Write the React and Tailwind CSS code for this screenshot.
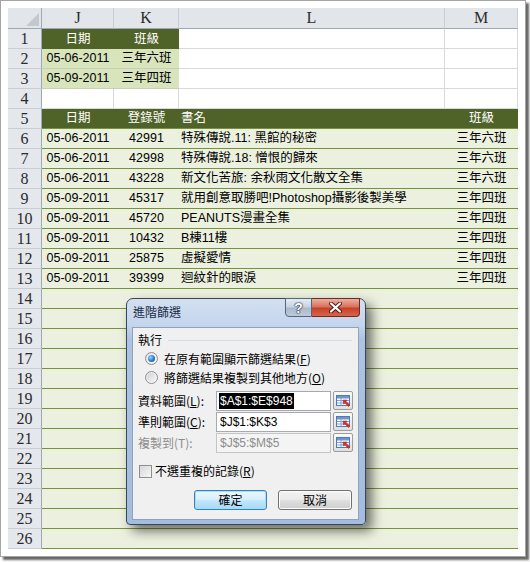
import React from 'react';

const dataRows = [
  ['05-06-2011', '42991', '特殊傳說.11: 黑館的秘密', '三年六班'],
  ['05-06-2011', '42998', '特殊傳說.18: 憎恨的歸來', '三年六班'],
  ['05-06-2011', '43228', '新文化苦旅: 余秋雨文化散文全集', '三年六班'],
  ['05-09-2011', '45317', '就用創意取勝吧!Photoshop攝影後製美學', '三年四班'],
  ['05-09-2011', '45720', 'PEANUTS漫畫全集', '三年四班'],
  ['05-09-2011', '10432', 'B棟11樓', '三年四班'],
  ['05-09-2011', '25875', '虛擬愛情', '三年四班'],
  ['05-09-2011', '39399', '迴紋針的眼淚', '三年四班'],
];

const emptyRows = [14, 15, 16, 17, 18, 19, 20, 21, 22, 23, 24, 25, 26];

const rowHead =
  "flex items-center justify-center bg-[#e4e7ec] border-r border-b border-r-[#9ea7b3] border-b-[#c9ced5] text-[16px] text-[#2b2b2b] font-['Liberation_Serif',serif] leading-none";
const colHead =
  "flex items-center justify-center bg-[#e2e5ea] border-r border-b border-r-[#c9ced5] border-b-[#9ea7b3] text-[16px] text-[#2b2b2b] font-['Liberation_Serif',serif] leading-none";
const white = 'bg-white border-r border-b border-[#d9d9d9]';
const dark = 'flex items-center justify-center bg-[#4f6228] text-white';
const crit = 'flex items-center justify-center bg-[#d8e4bc] border-b border-[#c7d0b4]';
const dataC = 'flex items-center justify-center bg-[#ebf1de] border-b border-[#76933c]';
const dataL = 'flex items-center justify-start pl-[2px] bg-[#ebf1de] border-b border-[#76933c] whitespace-nowrap overflow-hidden';
const green = 'bg-[#ebf1de] border-b border-[#76933c]';

function Picker() {
  return (
    <div className="w-[20px] h-[19px] ml-[2px] flex items-center justify-center border border-[#9c9c9c] rounded-[2px] bg-gradient-to-b from-[#fbfbfb] to-[#dedede]">
      <svg width="15" height="12" viewBox="0 0 15 12">
        <rect x="0.5" y="0.5" width="13" height="10" fill="#ffffff" stroke="#4f79b8" />
        <rect x="1" y="1" width="12" height="2.5" fill="#6d95cf" />
        <line x1="1" y1="5.5" x2="13" y2="5.5" stroke="#7fa0d2" />
        <line x1="1" y1="8" x2="13" y2="8" stroke="#7fa0d2" />
        <line x1="5" y1="3" x2="5" y2="10.5" stroke="#7fa0d2" />
        <polygon points="7,5 11,5 10,6.5 14,10 12.5,11.5 9,8 7.5,9" fill="#e0322a" stroke="#a01a14" strokeWidth="0.5" />
      </svg>
    </div>
  );
}

function Radio({ checked }) {
  return (
    <div className="w-[13px] h-[13px] rounded-full border border-[#8c8f94] bg-gradient-to-br from-[#e6e6e6] to-[#f8f8f8] flex items-center justify-center">
      {checked ? (
        <div className="w-[7px] h-[7px] rounded-full bg-[radial-gradient(circle_at_35%_35%,#9fd2ff_0%,#2a78d0_55%,#0f4b96_100%)]" />
      ) : (
        <div className="w-[9px] h-[9px] rounded-full bg-gradient-to-br from-[#d5d5d5] to-[#f4f4f4]" />
      )}
    </div>
  );
}

export default function App() {
  return (
    <div className="w-[530px] h-[562px] bg-white font-['Liberation_Sans','Noto_Sans_CJK_TC',sans-serif]">
      <div className="w-[526px] h-[557px] border border-[#a5a5a5] bg-white p-[7px] shadow-[3px_3px_2px_rgba(0,0,0,0.6)]">
        <div className="relative grid grid-cols-[34px_72px_65px_266px_73px] grid-rows-[21px_repeat(26,20px)] w-[510px] h-[541px] text-[12.5px] text-black leading-none">
          {/* column header */}
          <div className="relative bg-[#e2e5ea] border-r border-b border-r-[#9ea7b3] border-b-[#9ea7b3] overflow-hidden">
            <div className="absolute right-[2px] bottom-[2px] w-0 h-0 border-l-[13px] border-l-transparent border-b-[13px] border-b-[#c3c8cf]" />
          </div>
          <div className={colHead}>J</div>
          <div className={colHead}>K</div>
          <div className={colHead}>L</div>
          <div className={colHead}>M</div>

          {/* row 1 */}
          <div className={rowHead}>1</div>
          <div className={dark}>日期</div>
          <div className={dark}>班級</div>
          <div className={white} />
          <div className={white} />

          {/* row 2 */}
          <div className={rowHead}>2</div>
          <div className={crit}>05-06-2011</div>
          <div className={crit}>三年六班</div>
          <div className={white} />
          <div className={white} />

          {/* row 3 */}
          <div className={rowHead}>3</div>
          <div className={crit}>05-09-2011</div>
          <div className={crit}>三年四班</div>
          <div className={white} />
          <div className={white} />

          {/* row 4 */}
          <div className={rowHead}>4</div>
          <div className={white} />
          <div className={white} />
          <div className={white} />
          <div className={white} />

          {/* row 5 */}
          <div className={rowHead}>5</div>
          <div className={dark + ' border-b border-[#76933c]'}>日期</div>
          <div className={dark + ' border-b border-[#76933c]'}>登錄號</div>
          <div className="flex items-center pl-[2px] bg-[#4f6228] text-white border-b border-[#76933c]">書名</div>
          <div className={dark + ' border-b border-[#76933c]'}>班級</div>

          {dataRows.map((r, i) => (
            <React.Fragment key={i}>
              <div className={rowHead}>{i + 6}</div>
              <div className={dataC}>{r[0]}</div>
              <div className={dataC}>{r[1]}</div>
              <div className={dataL}>{r[2]}</div>
              <div className={dataC}>{r[3]}</div>
            </React.Fragment>
          ))}

          {emptyRows.map((n) => (
            <React.Fragment key={n}>
              <div className={rowHead}>{n}</div>
              <div className={green} />
              <div className={green} />
              <div className={green} />
              <div className={green} />
            </React.Fragment>
          ))}

          {/* dialog */}
          <div className="absolute left-[118px] top-[290px] w-[240px] h-[227px] rounded-t-[7px] rounded-b-[4px] border border-[#3a4658] bg-[linear-gradient(to_bottom,#d3e0f1_0px,#c4d5ec_26px,#adc3e1_40px,#a4bcdd_100%)] shadow-[6px_6px_12px_rgba(0,0,0,0.55)] flex flex-col font-['Noto_Sans_CJK_TC','Liberation_Sans',sans-serif] text-[12px]">
            <div className="h-[28px] flex items-start">
              <div className="pl-[6px] pt-[5px] text-[12px] text-[#1b2b45] leading-[16px]">進階篩選</div>
              <div className="ml-auto mr-[5px] mt-[-1px] flex">
                <div className="w-[27px] h-[19px] rounded-bl-[4px] border border-[#56657a] bg-[linear-gradient(to_bottom,#e4ebf3_0%,#c9d4e2_45%,#aab9cd_55%,#bfcbdb_100%)] flex items-center justify-center text-white font-bold text-[14px] font-['Liberation_Sans',sans-serif] [text-shadow:0_0_1px_#223,0_0_1px_#223,0_0_2px_#334]">
                  ?
                </div>
                <div className="w-[48px] h-[19px] rounded-br-[4px] border border-[#6e2a20] border-l-0 bg-[linear-gradient(to_bottom,#eab0a2_0%,#d9735e_45%,#c6412a_55%,#d8664c_100%)] flex items-center justify-center">
                  <svg width="13" height="11" viewBox="0 0 13 11">
                    <path d="M2 1.5 L11 9.5 M11 1.5 L2 9.5" stroke="#4a1a14" strokeWidth="4" strokeLinecap="round" />
                    <path d="M2 1.5 L11 9.5 M11 1.5 L2 9.5" stroke="#ffffff" strokeWidth="2.2" strokeLinecap="round" />
                  </svg>
                </div>
              </div>
            </div>
            <div className="ml-[5px] w-[227px] h-[193px] border border-[#8ea3c0] bg-[#f0f0f0] flex flex-col px-[5px] leading-none text-black">
              <div className="mt-[3px] h-[18px] flex items-center">
                <span>執行</span>
                <div className="flex-1 ml-[6px] mr-[1px] h-px bg-[#d5dde6]" />
              </div>
              <div className="h-[19px] flex items-center pl-[7px]">
                <Radio checked />
                <span className="ml-[6px]">在原有範圍顯示篩選結果(<u>F</u>)</span>
              </div>
              <div className="h-[19px] flex items-center pl-[7px]">
                <Radio />
                <span className="ml-[6px]">將篩選結果複製到其他地方(<u>O</u>)</span>
              </div>
              <div className="mt-[3px] h-[21px] flex items-center">
                <span className="w-[78px]">資料範圍(<u>L</u>):</span>
                <div className="w-[115px] h-[20px] border border-[#a6a9b0] bg-white flex items-center pl-[2px] font-['Liberation_Sans',sans-serif] text-[12px]">
                  <span className="bg-black text-white px-[1px] py-[2px]">$A$1:$E$948</span>
                </div>
                <Picker />
              </div>
              <div className="h-[21px] flex items-center">
                <span className="w-[78px]">準則範圍(<u>C</u>):</span>
                <div className="w-[115px] h-[20px] border border-[#a6a9b0] bg-white flex items-center pl-[3px] font-['Liberation_Sans',sans-serif] text-[12px]">
                  $J$1:$K$3
                </div>
                <Picker />
              </div>
              <div className="h-[21px] flex items-center text-[#8d8d8d]">
                <span className="w-[78px]">複製到(T):</span>
                <div className="w-[115px] h-[20px] border border-[#c2c4c8] bg-[#f4f4f4] flex items-center pl-[3px] font-['Liberation_Sans',sans-serif] text-[12px]">
                  $J$5:$M$5
                </div>
                <Picker />
              </div>
              <div className="mt-[8px] h-[20px] flex items-center pl-[1px]">
                <div className="w-[13px] h-[13px] border border-[#8c8f94] bg-gradient-to-br from-[#d8d8d8] to-[#f7f7f7]" />
                <span className="ml-[3px]">不選重複的記錄(<u>R</u>)</span>
              </div>
              <div className="mt-[9px] h-[20px] flex items-center pl-[56px] gap-[11px]">
                <div className="w-[73px] h-[20px] rounded-[3px] border border-[#3c7fb1] bg-[linear-gradient(to_bottom,#eaf6fd_0%,#d9f0fc_45%,#bee6fd_55%,#a7d9f5_100%)] shadow-[inset_0_0_0_1px_#9fe0ff] flex items-center justify-center">
                  確定
                </div>
                <div className="w-[74px] h-[20px] rounded-[3px] border border-[#707070] bg-[linear-gradient(to_bottom,#f2f2f2_0%,#ebebeb_45%,#dddddd_55%,#cfcfcf_100%)] shadow-[inset_0_0_0_1px_#fcfcfc] flex items-center justify-center">
                  取消
                </div>
              </div>
            </div>
          </div>
        </div>
      </div>
    </div>
  );
}
